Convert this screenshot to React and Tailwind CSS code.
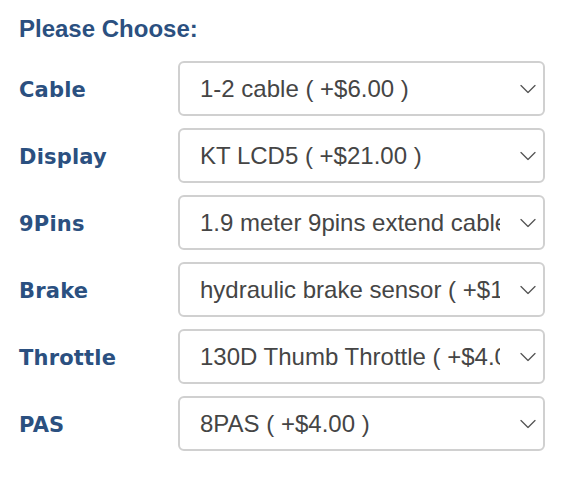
const options = [
  { label: 'Cable', value: '1-2 cable ( +$6.00 )' },
  { label: 'Display', value: 'KT LCD5 ( +$21.00 )' },
  { label: '9Pins', value: '1.9 meter 9pins extend cable ( +$3.00 )' },
  { label: 'Brake', value: 'hydraulic brake sensor ( +$10.00 )' },
  { label: 'Throttle', value: '130D Thumb Throttle ( +$4.00 )' },
  { label: 'PAS', value: '8PAS ( +$4.00 )' },
];

function Chevron() {
  return (
    <svg width="16" height="9" viewBox="0 0 16 9" fill="none" className="shrink-0">
      <path d="M1 1l7 7 7-7" stroke="#555" strokeWidth="1.3" strokeLinecap="round" strokeLinejoin="round" />
    </svg>
  );
}

export default function App() {
  return (
    <div className="w-[586px] h-[486px] bg-white pl-[19px] pt-[14px]">
      <h3 className="text-[24px] font-bold text-[#2b5080] font-['Liberation_Sans',Arial,sans-serif] leading-[29px]">
        Please Choose:
      </h3>
      <div className="mt-[18px] flex flex-col gap-[12px]">
        {options.map((o) => (
          <div key={o.label} className="flex items-center">
            <div className="w-[159px] text-[21px] font-bold text-[#2b5080] font-['DejaVu_Sans',Verdana,sans-serif] tracking-[0.2px] pt-[5px]">
              {o.label}
            </div>
            <div className="relative w-[367px] h-[55px] rounded-[6px] border-2 border-[#d0d0d0] bg-white flex items-center pl-[20px] pr-[43px]">
              <span className="block overflow-hidden whitespace-nowrap text-[24px] text-[#454545] font-['Liberation_Sans',Arial,sans-serif]">
                {o.value}
              </span>
              <div className="absolute right-[7px] top-1/2 -translate-y-1/2">
                <Chevron />
              </div>
            </div>
          </div>
        ))}
      </div>
    </div>
  );
}
